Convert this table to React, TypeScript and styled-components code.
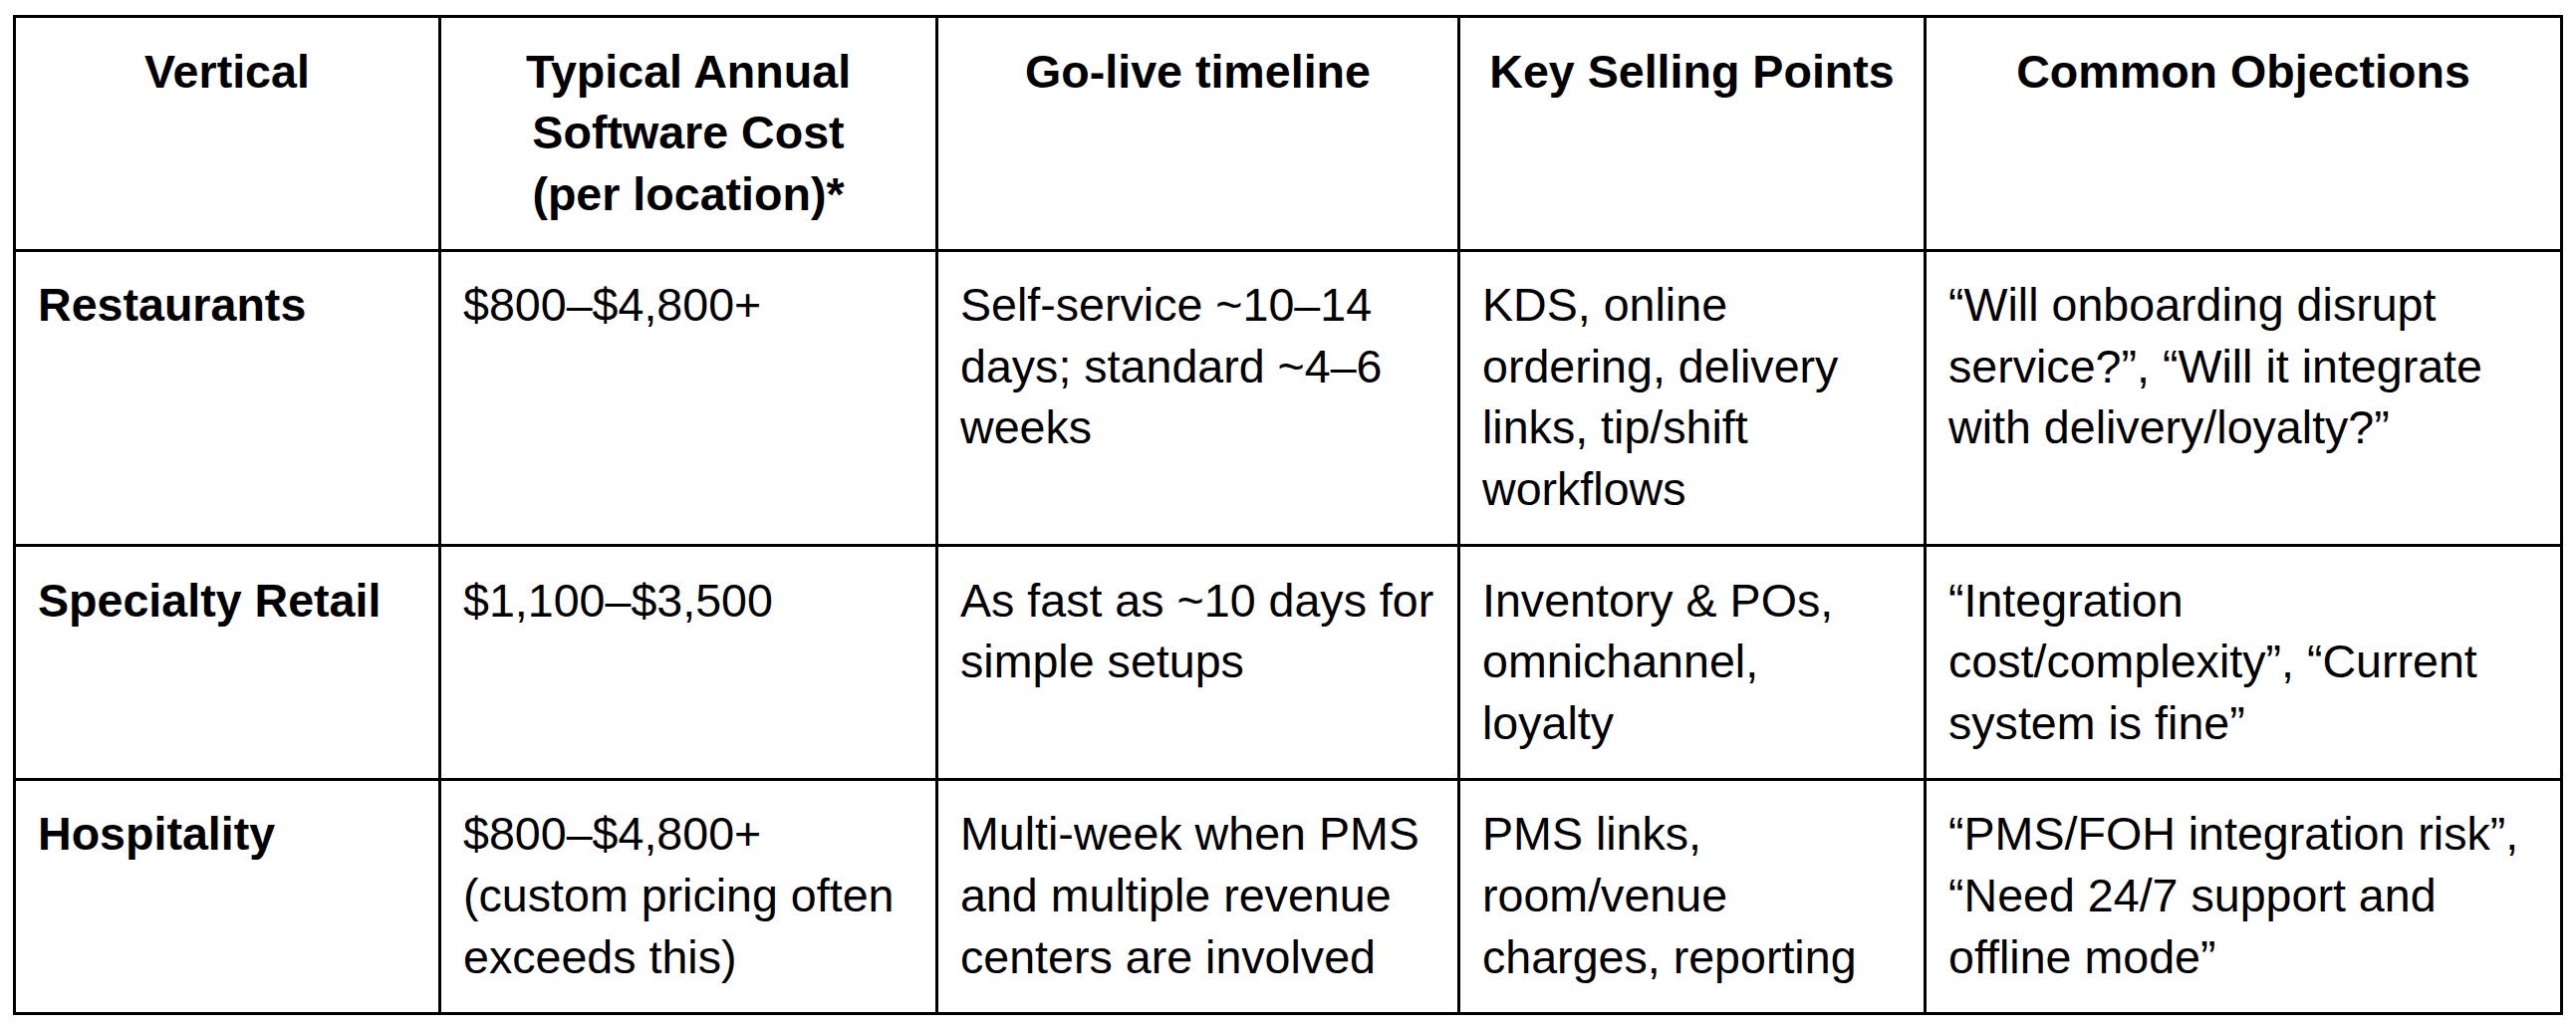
import styled, { createGlobalStyle } from "styled-components";

const GlobalStyle = createGlobalStyle`
  html, body {
    margin: 0;
    background: #ffffff;
  }
  body {
    font-family: "Liberation Sans", Arial, Helvetica, sans-serif;
    color: #000000;
  }
`;

const Page = styled.div`
  padding: 15px 13px;
`;

const Table = styled.div`
  display: grid;
  grid-template-columns: 427px 499px 524px 468px 639px;
  width: max-content;
  border-left: 3px solid #000;
  border-top: 3px solid #000;
`;

const Cell = styled.div<{ $head?: boolean; $bold?: boolean }>`
  box-sizing: border-box;
  border-right: 3px solid #000;
  border-bottom: 3px solid #000;
  padding: 23.5px 22px;
  font-size: 46.6px;
  line-height: 61.6px;
  white-space: nowrap;
  font-weight: ${(p) => (p.$head || p.$bold ? 700 : 400)};
  text-align: ${(p) => (p.$head ? "center" : "left")};
`;

const headers: string[][] = [
  ["Vertical"],
  ["Typical Annual", "Software Cost", "(per location)*"],
  ["Go-live timeline"],
  ["Key Selling Points"],
  ["Common Objections"],
];

const rows: string[][][] = [
  [
    ["Restaurants"],
    ["$800–$4,800+"],
    ["Self-service ~10–14", "days; standard ~4–6", "weeks"],
    ["KDS, online", "ordering, delivery", "links, tip/shift", "workflows"],
    ["“Will onboarding disrupt", "service?”, “Will it integrate", "with delivery/loyalty?”"],
  ],
  [
    ["Specialty Retail"],
    ["$1,100–$3,500"],
    ["As fast as ~10 days for", "simple setups"],
    ["Inventory & POs,", "omnichannel,", "loyalty"],
    ["“Integration", "cost/complexity”, “Current", "system is fine”"],
  ],
  [
    ["Hospitality"],
    ["$800–$4,800+", "(custom pricing often", "exceeds this)"],
    ["Multi-week when PMS", "and multiple revenue", "centers are involved"],
    ["PMS links,", "room/venue", "charges, reporting"],
    ["“PMS/FOH integration risk”,", "“Need 24/7 support and", "offline mode”"],
  ],
];

function Lines({ lines }: { lines: string[] }) {
  return (
    <>
      {lines.map((line, i) => (
        <span key={i}>
          {line}
          {i < lines.length - 1 && <br />}
        </span>
      ))}
    </>
  );
}

export default function App() {
  return (
    <Page>
      <GlobalStyle />
      <Table>
        {headers.map((h, i) => (
          <Cell key={"h" + i} $head>
            <Lines lines={h} />
          </Cell>
        ))}
        {rows.map((row, r) =>
          row.map((cell, c) => (
            <Cell key={r + "-" + c} $bold={c === 0}>
              <Lines lines={cell} />
            </Cell>
          ))
        )}
      </Table>
    </Page>
  );
}
